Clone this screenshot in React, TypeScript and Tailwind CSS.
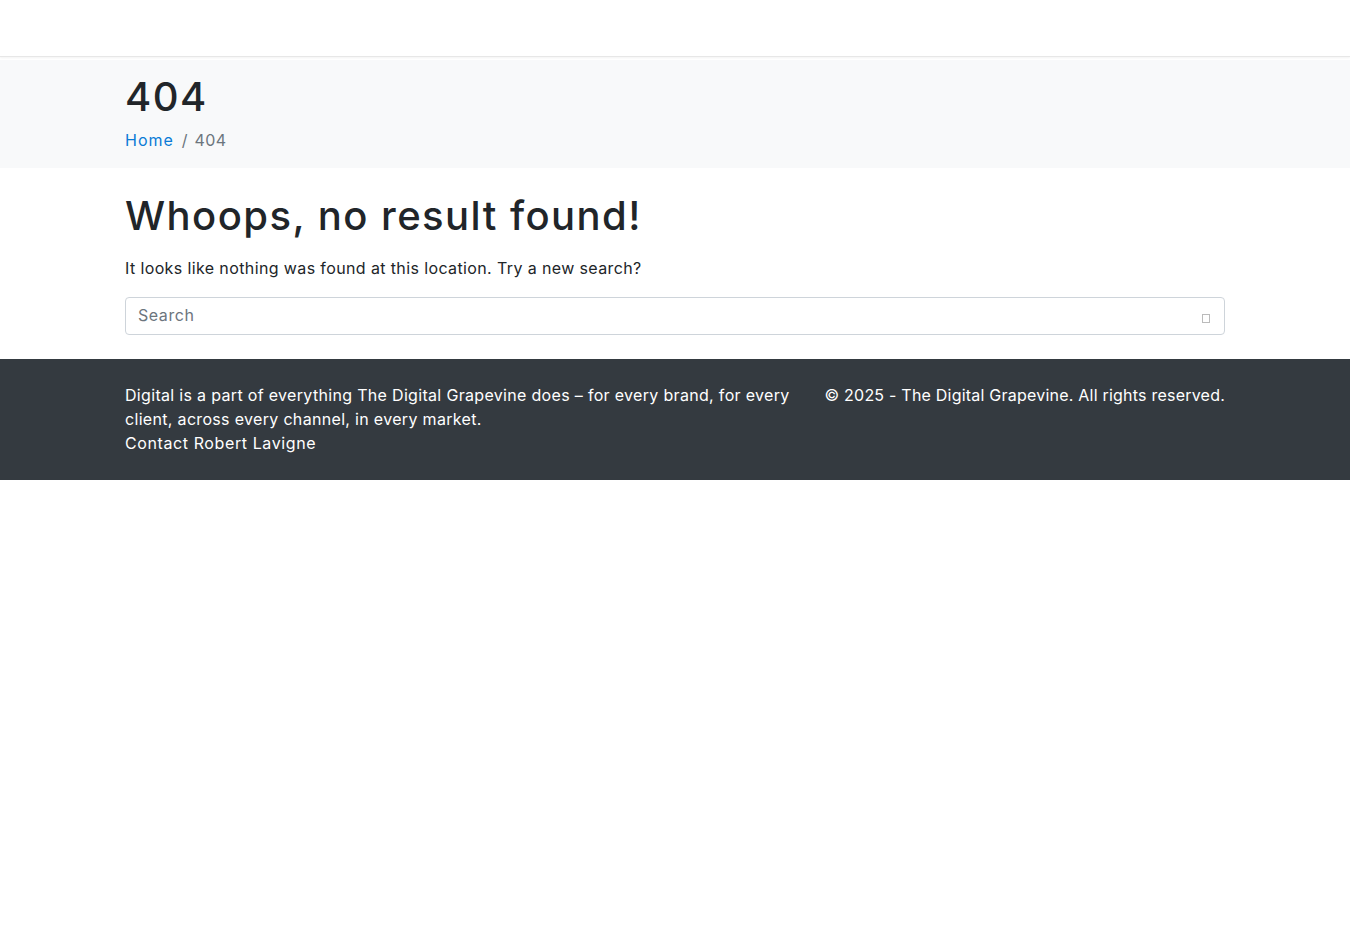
export default function App() {
  return (
    <div className="min-h-[940px] bg-white font-['Inter','Noto_Sans',sans-serif] text-[16px] leading-[24px] text-[#212529]">
      <nav className="h-[57px] border-b border-[#e7e7e7] shadow-[0_1px_2px_rgba(0,0,0,0.05)]"></nav>

      <header className="mt-[3px] h-[108px] bg-[#f8f9fa]">
        <div className="mx-auto w-[1100px] pt-[13px]">
          <h1 className="text-[40px] leading-[48px] font-medium tracking-[1.5px] text-[#212529]">404</h1>
          <div className="mt-[7px] flex items-center">
            <a className="tracking-[1px] text-[#0a7bd6]">Home</a>
            <span className="pr-[7px] pl-2 text-[#6c757d]">/</span>
            <span className="tracking-[0.4px] text-[#6c757d]">404</span>
          </div>
        </div>
      </header>

      <main className="mx-auto w-[1100px] pt-[24px] pb-[24px]">
        <h2 className="text-[40px] leading-[48px] font-medium tracking-[1.45px] text-[#212529]">Whoops, no result found!</h2>
        <p className="mt-[16px] tracking-[0.38px]">It looks like nothing was found at this location. Try a new search?</p>
        <div className="relative mt-[17px]">
          <input
            placeholder="Search"
            className="block h-[38px] w-full rounded-[4px] border border-[#ced4da] bg-white px-3 pb-[2px] text-[16px] tracking-[0.55px] text-[#495057] outline-none placeholder:text-[#6c757d]"
          />
          <span className="absolute top-[17px] right-[15px] h-[9px] w-[8px] border border-[#bbbbbb]"></span>
        </div>
      </main>

      <footer className="h-[121px] bg-[#343a40] pt-[24px] text-white">
        <div className="mx-auto flex w-[1100px] justify-between">
          <div className="w-[670px]">
            <p className="tracking-[0.32px]">Digital is a part of everything The Digital Grapevine does – for every brand, for every client, across every channel, in every market.</p>
            <a className="tracking-[0.6px]">Contact Robert Lavigne</a>
          </div>
          <p className="tracking-[0.22px]">© 2025 - The Digital Grapevine. All rights reserved.</p>
        </div>
      </footer>
    </div>
  )
}
